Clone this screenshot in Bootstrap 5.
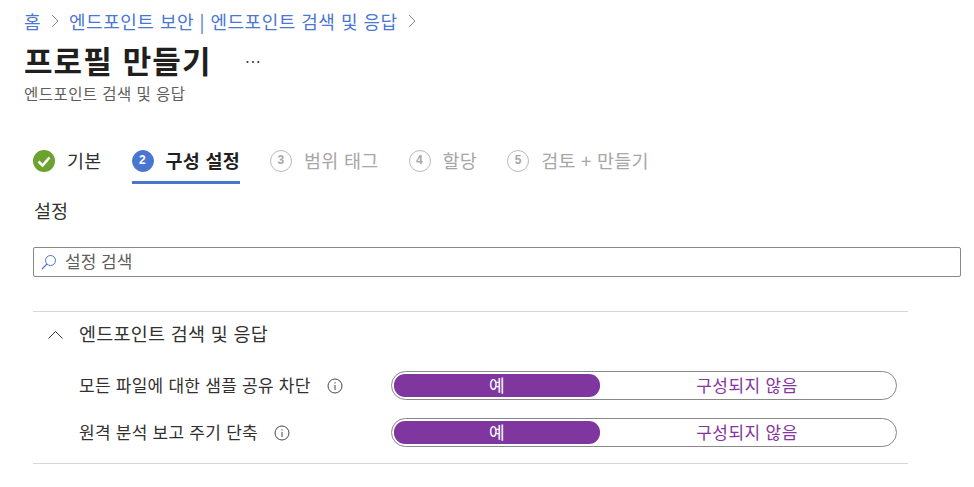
<!DOCTYPE html>
<html lang="ko">
<head>
    <meta charset="UTF-8">
    <meta name="viewport" content="width=device-width, initial-scale=1.0">
    <title>프로필 만들기</title>
    <link rel="stylesheet" href="https://cdn.jsdelivr.net/npm/bootstrap@5.3.0/dist/css/bootstrap.min.css">
    <style>
        body { font-family: "Noto Sans CJK KR", "Liberation Sans", sans-serif; color: #323130; background: #fff; overflow: hidden; height: 487px; }
        .page-wrap { padding-left: 24px; }
        .crumbs { height: 24px; margin-top: 9px; font-size: 18px; letter-spacing: .5px; line-height: 24px; gap: 10px; }
        .crumbs a { color: #4a76d4; text-decoration: none; }
        .crumb-sep { width: 8px; height: 14px; color: #8a8886; }
        .title-row { margin-top: 8px; height: 38px; }
        .title-row h1 { font-size: 31px; letter-spacing: 1.1px; line-height: 38px; font-weight: 700; margin: 0; color: #201f1e; }
        .more-dots { margin-left: 34px; margin-bottom: 6px; font-size: 14px; color: #323130; letter-spacing: 1.5px; line-height: 20px; }
        .sub-title { font-size: 15.5px; letter-spacing: .45px; line-height: 18px; color: #605e5c; margin-top: 5px; }
        .step-row { margin-top: 40px; margin-left: 9px; gap: 30px; }
        .step-item { height: 42px; padding-top: 6px; font-size: 18.5px; letter-spacing: .25px; line-height: 24px; gap: 12px; color: #a8a6a4; align-items: flex-start; }
        .step-item.step-done { color: #323130; }
        .step-item.step-now { color: #201f1e; font-weight: 700; border-bottom: 3px solid #4a76d0; }
        .step-num { width: 22px; height: 22px; border-radius: 50%; border: 1.5px solid #bdbbb9; font-size: 12px; font-weight: 700; color: #a8a6a4; line-height: 19px; text-align: center; font-family: "Liberation Sans", sans-serif; margin-top: 2px; flex: none; }
        .step-item.step-now .step-num { background: #4a76d0; border-color: #4a76d0; color: #fff; }
        .step-check { width: 22px; height: 22px; margin-top: 2px; flex: none; }
        .sec-label { margin-top: 14px; margin-left: 10px; font-size: 18.5px; line-height: 24px; color: #323130; }
        .search-box { margin-top: 25px; margin-left: 9px; width: 928px; height: 30px; border: 1px solid #8a8886; border-radius: 2px; padding-left: 7px; gap: 8px; font-size: 17px; color: #605e5c; }
        .search-box span { margin-bottom: 2px; }
        .search-icon { width: 16px; height: 16px; }
        .group-box { margin-top: 34px; margin-left: 9px; width: 875px; border-top: 1px solid #d6d6d6; border-bottom: 1px solid #d6d6d6; height: 153px; }
        .group-head { height: 44px; margin-bottom: 6px; font-size: 18.5px; line-height: 24px; letter-spacing: .25px; color: #323130; padding-left: 15px; gap: 16px; }
        .group-head span { margin-bottom: 3px; }
        .chev-up { width: 15px; height: 9px; }
        .set-row { height: 47px; padding-left: 46px; font-size: 17px; letter-spacing: .25px; color: #323130; }
        .set-name { width: 312px; gap: 16px; }
        .set-name span { margin-bottom: 2px; }
        .info-mark { width: 16px; height: 16px; }
        .pill-toggle { width: 506px; height: 29px; border: 1px solid #8a8886; border-radius: 15px; padding: 2px; font-size: 17px; }
        .pill-on { width: 206px; border-radius: 11px; background: #7f369f; color: #fff; text-align: center; line-height: 21px; }
        .pill-off { flex: 1; text-align: center; line-height: 21px; color: #84369e; letter-spacing: .4px; }
    </style>
</head>
<body>
    <div class="page-wrap">
        <!-- breadcrumb -->
        <div class="crumbs d-flex align-items-center">
            <a href="#">홈</a>
            <svg class="crumb-sep" viewBox="0 0 8 14"><path d="M1 1l6 6-6 6" fill="none" stroke="currentColor" stroke-width="1"/></svg>
            <a href="#">엔드포인트 보안 | 엔드포인트 검색 및 응답</a>
            <svg class="crumb-sep" viewBox="0 0 8 14"><path d="M1 1l6 6-6 6" fill="none" stroke="currentColor" stroke-width="1"/></svg>
        </div>

        <div class="title-row d-flex align-items-center">
            <h1>프로필 만들기</h1>
            <span class="more-dots">...</span>
        </div>
        <div class="sub-title">엔드포인트 검색 및 응답</div>

        <!-- wizard steps -->
        <div class="step-row d-flex">
            <div class="step-item step-done d-flex">
                <svg class="step-check" viewBox="0 0 22 22"><circle cx="11" cy="11" r="11" fill="#6ba32e"/><path d="M5.5 11.5l4 4 7-8" fill="none" stroke="#fff" stroke-width="2.6"/></svg>
                <span>기본</span>
            </div>
            <div class="step-item step-now d-flex"><span class="step-num">2</span><span>구성 설정</span></div>
            <div class="step-item d-flex"><span class="step-num">3</span><span>범위 태그</span></div>
            <div class="step-item d-flex"><span class="step-num">4</span><span>할당</span></div>
            <div class="step-item d-flex"><span class="step-num">5</span><span>검토 + 만들기</span></div>
        </div>

        <div class="sec-label">설정</div>

        <div class="search-box d-flex align-items-center">
            <svg class="search-icon" viewBox="0 0 16 16"><circle cx="9.5" cy="6.5" r="5" fill="none" stroke="#4a76d0" stroke-width="1"/><path d="M6 10l-5 5" stroke="#4a76d0" stroke-width="1.2"/></svg>
            <span>설정 검색</span>
        </div>

        <div class="group-box">
            <div class="group-head d-flex align-items-center">
                <svg class="chev-up" viewBox="0 0 15 9"><path d="M0.5 8.5l7-7 7 7" fill="none" stroke="#323130" stroke-width="1"/></svg>
                <span>엔드포인트 검색 및 응답</span>
            </div>
            <div class="set-row d-flex align-items-center">
                <div class="set-name d-flex align-items-center">
                    <span>모든 파일에 대한 샘플 공유 차단</span>
                    <svg class="info-mark" viewBox="0 0 16 16"><circle cx="8" cy="8" r="7" fill="none" stroke="#484644"/><path d="M8 7v5M8 4.2v1.3" stroke="#484644"/></svg>
                </div>
                <div class="pill-toggle d-flex">
                    <div class="pill-on">예</div>
                    <div class="pill-off">구성되지 않음</div>
                </div>
            </div>
            <div class="set-row d-flex align-items-center">
                <div class="set-name d-flex align-items-center">
                    <span>원격 분석 보고 주기 단축</span>
                    <svg class="info-mark" viewBox="0 0 16 16"><circle cx="8" cy="8" r="7" fill="none" stroke="#484644"/><path d="M8 7v5M8 4.2v1.3" stroke="#484644"/></svg>
                </div>
                <div class="pill-toggle d-flex">
                    <div class="pill-on">예</div>
                    <div class="pill-off">구성되지 않음</div>
                </div>
            </div>
        </div>
    </div>
    <script src="https://cdn.jsdelivr.net/npm/bootstrap@5.3.0/dist/js/bootstrap.bundle.min.js"></script>
</body>
</html>
